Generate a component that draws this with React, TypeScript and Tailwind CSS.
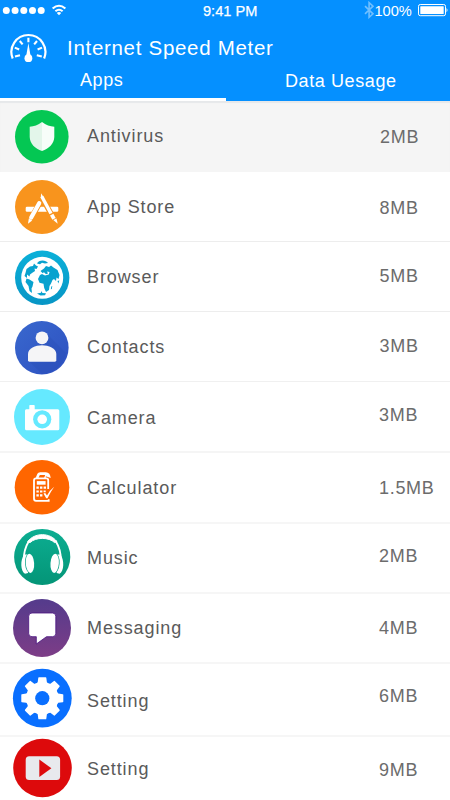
import React from 'react';

function Icon({ className, children }: { className: string; children: React.ReactNode }) {
  return (
    <svg viewBox="-30 -30 60 60" className={`ml-3 h-[60px] w-[60px] shrink-0 ${className}`}>
      {children}
    </svg>
  );
}

const Shield = () => (
  <>
    <circle cx="-0.2" cy="-0.2" r="26.8" fill="#04c753" />
    <path d="M0-15C-4-12-8-10.5-12.3-10.3V0C-12 7-7 11.5 0 14Z" fill="#e3f6ea" />
    <path d="M0-15C4-12 8-10.5 12.3-10.3V0C12 7 7 11.5 0 14Z" fill="#f7fdf9" />
  </>
);

const Store = () => (
  <>
    <circle r="27" fill="#f8941d" />
    <rect x="-16.3" y="-0.3" width="32.6" height="5" rx="1.3" fill="#fff" />
    <path d="M-1.5-5.5L-10.5 10.5M-0.3-10L13 14" stroke="#f8941d" strokeWidth="5.6" />
    <path d="M-2.8-3.8L-10.8 10.6" stroke="#fff" strokeWidth="4.2" strokeLinecap="round" />
    <path d="M-13.2 11.4L-9.8 13.4L-14 16.8Z" fill="#fff" />
    <path d="M-0.9-13.8L2.2-9L0.8-6.8L-1.2-9.4Z" fill="#fff" />
    <path d="M-0.2-10.5L9 6.5" stroke="#fff" strokeWidth="3.4" />
    <path d="M9.7 7.6L12 11.8" stroke="#fff" strokeWidth="3.8" />
    <path d="M11.3 13L14.5 11.4L15.7 16.8Z" fill="#fff" />
  </>
);

const Globe = () => (
  <>
    <defs>
      <linearGradient id="sea" x1="0" y1="0" x2="0" y2="1">
        <stop stopColor="#0bb0d9" />
        <stop offset="1" stopColor="#0795c5" />
      </linearGradient>
    </defs>
    <circle cx="0.2" cy="-0.2" r="27.2" fill="url(#sea)" />
    <circle cx="0.2" cy="-0.2" r="21" fill="#fff" />
    <g fill="#08a2cf">
      <path d="M-16.5-5L-15.5-9L-12-11.5L-9-12L-8-14.5L-6-12.5L-4-11.5L-5.5-9L-7.5-9.5L-7-7L-10-5L-12-3.5L-12.5-1.5L-15-3.5L-15 0L-17.5-2Z" />
      <path d="M-15.5 0.5L-12.5 1.5L-8.5 4L-9.5 8.5L-10.5 10.5L-10 15L-12.5 13L-13.5 8L-16.5 4Z" />
      <path d="M-5-14.5C-3.5-18.5 4-18.5 6-15L3-14.5L0-15.3L-2-13.8Z" />
      <path d="M-1.5-7L2-9.5L4-12L7-11L9-12.5L11.5-10.5L15.5-8L17.5-3L16.5 1L14.5-.5L14 3L12 1L10.5 2L9 5.5L7.5 8L7 12L4 14L2.2 10L1.5 5.8L-2.5 4.8L-4 1L-2-3L1-4.5Z" />
      <path d="M-.5-4.2L2-5.8L4-3.8L6-4.5L5-6.4L7.5-6L6.8-3.5L3-2.6Z" fill="#fff" />
      <path d="M-5 15.5L-1 14.8V13L.5 15L4 15.3L3 17.3L-1.5 17.5Z" />
      <path d="M9.3 8.5L10.3 8L9.8 11L8.8 11.3ZM15.5 3L17.3 2.5L16.3 5.5Z" />
    </g>
  </>
);

const Person = () => (
  <>
    <defs>
      <linearGradient id="navy" x1="0" y1="0" x2="1" y2="1">
        <stop stopColor="#3968ce" />
        <stop offset="1" stopColor="#2d50c0" />
      </linearGradient>
    </defs>
    <circle cx="-0.2" cy="-0.3" r="26.8" fill="url(#navy)" />
    <path d="M4.7-14.2L24 5A27 27 0 0 1 0 26L-13 13.5Z" fill="#294cb5" opacity=".35" />
    <circle cx="0" cy="-10.2" r="6.4" fill="#f5f5f7" />
    <path d="M-14 12.3V6C-14 0-6.5-2.8 0-2.8S14.3 0 14.3 6V12.3Q14.3 13.7 12.9 13.7H-12.6Q-14 13.7-14 12.3Z" fill="#f5f5f7" />
  </>
);

const Camera = () => (
  <>
    <circle r="28" fill="#65e9ff" />
    <path d="M-15.7-7.8H-12.7V-11.2Q-12.7-12-12-12H-8Q-7.3-12-7.3-11.2V-7.8H15.8Q17.3-7.6 17.3-6.3V11.8Q17.3 13.3 15.8 13.3H-15.5Q-17 13.3-17 11.8V-6.3Q-17-7.8-15.7-7.8Z" fill="#fff" />
    <circle cx="0.2" cy="2.3" r="9.1" fill="#65e9ff" />
    <circle cx="0.2" cy="2.3" r="4.8" fill="#fff" />
  </>
);

const Calculator = () => (
  <>
    <circle cy="0.3" r="27.3" fill="#ff6600" />
    <path d="M6.2 2V-6.7Q6.2-8.6 4.3-8.6H-6Q-8-8.6-8-6.6V11.5Q-8 13.8-6 13.8H6.7V12.2" fill="none" stroke="#fff" strokeWidth="1.8" />
    <path d="M-6.3-9.3L-4.6-13.3Q-4-14.8-1.8-14.8H3.8Q8.3-14.5 8.7-9L3.8-10.8V-8.6H1.9L3.2-11.9H-2.2L-3.7-8.6Z" fill="#fff" />
    <path d="M-5.2-5.9H3.6V-2.3H-5.2Z" fill="#fff" />
    <path d="M-5.6-.4h2.4v2.2h-2.4zM-2-.4h2.4v2.2h-2.4zM1.6-.4h2.4v2.2h-2.4zM-5.6 3.4h2.4v2.2h-2.4zM-2 3.4h2.4v2.2h-2.4zM1.6 3.4h2.1v1.9h-2.1zM-5.6 7.3h2.4v2.2h-2.4zM-2 7.3h2.4v2.2h-2.4z" fill="#fff" />
    <path d="M1.5 6.6L3.2 6L5 8.4Q8 3 12.2-.2Q8.2 5.5 5.5 11.3H4.2Z" fill="#fff" />
  </>
);

const Headphones = () => (
  <>
    <defs>
      <linearGradient id="teal" x1="0" y1="0" x2="0" y2="1">
        <stop stopColor="#0cae92" />
        <stop offset="1" stopColor="#049577" />
      </linearGradient>
    </defs>
    <circle cx="0.2" r="28.1" fill="url(#teal)" />
    <path d="M-18 3C-18.8-6-15.5-12-12.8-16.5M18.6 3C19.4-6 16.1-12 13.4-16.5" fill="none" stroke="#fff" strokeWidth="1.9" />
    <path d="M-14.3-15.2C-8-24.7 8.6-24.7 14.9-15.2L12.6-14.4C7-20-6.4-20-12-14.4Z" fill="#fff" stroke="#fff" />
    <path d="M-17.8-2.5C-22 3-21.5 14-17 16.8L-14 16V-2.5ZM18.4-2.5C22.6 3 22.1 14 17.6 16.8L14.6 16V-2.5Z" fill="#fff" />
    <ellipse cx="-12" cy="6.3" rx="5" ry="10.3" fill="#08a387" transform="rotate(-4 -12 6)" />
    <ellipse cx="12.6" cy="6.3" rx="5" ry="10.3" fill="#08a387" transform="rotate(4 12.6 6)" />
    <ellipse cx="-12.1" cy="6.3" rx="4.2" ry="9.6" fill="#fff" transform="rotate(-4 -12 6)" />
    <ellipse cx="12.7" cy="6.3" rx="4.2" ry="9.6" fill="#fff" transform="rotate(4 12.6 6)" />
  </>
);

const Message = () => (
  <>
    <defs>
      <linearGradient id="violet" x1="0" y1="0" x2="0" y2="1">
        <stop stopColor="#543b8c" />
        <stop offset="1" stopColor="#7d3d87" />
      </linearGradient>
    </defs>
    <circle cx="0" cy="0" r="29" fill="url(#violet)" />
    <path d="M-10-15H10.5Q13.8-15 13.8-11.7V5.4Q13.8 8.7 10.5 8.7H4.5L-5.7 16V8.7H-10Q-13.3 8.7-13.3 5.4V-11.7Q-13.3-15-10-15Z" fill="#fff" stroke="#49117f" strokeWidth=".8" />
  </>
);

const Gear = () => (
  <>
    <circle cx="0.3" cy="0.2" r="29.4" fill="#096fff" />
    <g transform="translate(.3 .2)" fill="#fff">
      <circle r="16.2" />
      {[0, 45, 90, 135, 180, 225, 270, 315].map((a) => (
        <path key={a} d="M-6-14.5L-4.6-16L-4-20.5Q-3.9-21-3.4-21H3.4Q3.9-21 4-20.5L4.6-16L6-14.5Z" transform={`rotate(${a})`} />
      ))}
    </g>
    <circle cx="0.3" cy="0.2" r="7.1" fill="#096fff" />
  </>
);

const Video = () => (
  <>
    <circle cx="0.5" cy="0" r="29.3" fill="#dd0a0c" />
    <rect x="-16.3" y="-11.7" width="34.4" height="23.7" rx="3.5" fill="#e8e9ed" />
    <path d="M-2.7-8.5V9L9.4.3Z" fill="#dd0a0c" />
  </>
);

const rows = [
  { name: 'Antivirus', size: '2MB', art: <Shield />, row: 'h-[71px] bg-[#f5f5f5] shadow-[inset_0_2px_1px_#e6e8ea]', icon: 'mt-1.5', label: 'mt-[25px]', value: 'mt-[26px] w-[70px]' },
  { name: 'App Store', size: '8MB', art: <Store />, row: 'h-[70px] border-b border-[#ededed]', icon: 'mt-[5px]', label: 'mt-[25px]', value: 'mt-[26px] w-[70.5px]' },
  { name: 'Browser', size: '5MB', art: <Globe />, row: 'h-[70px] border-b border-[#ededed]', icon: 'mt-1.5', label: 'mt-[25px]', value: 'mt-6 w-[70.5px]' },
  { name: 'Contacts', size: '3MB', art: <Person />, row: 'h-[70px] border-b border-[#f0f0f0]', icon: 'mt-1.5', label: 'mt-[25px]', value: 'mt-6 w-[70.5px]' },
  { name: 'Camera', size: '3MB', art: <Camera />, row: 'h-[71px] border-b-2 border-[#f5f5f5]', icon: 'mt-[5px]', label: 'mt-[26px]', value: 'mt-[23px] w-[71px]' },
  { name: 'Calculator', size: '1.5MB', art: <Calculator />, row: 'h-[71px] border-b-2 border-[#f6f6f6]', icon: 'mt-1', label: 'mt-[25px]', value: 'mt-[25px] w-[71px]' },
  { name: 'Music', size: '2MB', art: <Headphones />, row: 'h-[70px] border-b-2 border-[#f6f6f6]', icon: 'mt-[3px]', label: 'mt-6', value: 'mt-[22px] w-[71px]' },
  { name: 'Messaging', size: '4MB', art: <Message />, row: 'h-[70px] border-b-2 border-[#f6f6f6]', icon: 'mt-1', label: 'mt-6', value: 'mt-6 w-[71px]' },
  { name: 'Setting', size: '6MB', art: <Gear />, row: 'h-[73px] border-b-2 border-[#f6f6f6]', icon: 'mt-1', label: 'mt-[27px]', value: 'mt-[22px] w-[71px]' },
  { name: 'Setting', size: '9MB', art: <Video />, row: 'h-[63px]', icon: 'mt-px', label: 'mt-[22px]', value: 'mt-[23px] w-[71px]' },
];

function StatusBar() {
  return (
    <div className="flex h-[22px] items-start text-[14.6px] leading-5">
      <svg viewBox="0 0 70 22" className="h-[22px] w-[70px] shrink-0" fill="#fff">
        {[6.3, 15.1, 23.8, 32.5, 41.2].map((x) => (
          <circle key={x} cx={x} cy="10.4" r="3.5" />
        ))}
        <path d="M51.9 7.7Q59 1.6 66.1 7.7L64.6 9.2Q59 4.3 53.4 9.2Z" />
        <path d="M54.7 10.5Q59 6.9 63.3 10.5L61.9 11.9Q59 9.5 56.1 11.9Z" />
        <path d="M56.8 12.9Q59 11.2 61.2 12.9L59 15.2Z" />
      </svg>
      <span className="ml-[133px] w-[159.5px] whitespace-nowrap pt-px [-webkit-text-stroke:0.25px_white]">9:41 PM</span>
      <svg viewBox="0 0 12 18" className="mt-[1px] h-[18px] w-3 shrink-0" fill="none" stroke="#70bfff" strokeWidth="1.6">
        <path d="M2 5.2L10 12.8L6.1 16.3V1.6L10 5.2L2 12.8" />
      </svg>
      <span className="w-[43px] whitespace-nowrap pt-px">100%</span>
      <svg viewBox="0 0 32 22" className="h-[22px] w-8 shrink-0">
        <rect x=".5" y="4.5" width="27" height="11.2" rx="1.8" fill="none" stroke="#fff" />
        <rect x="2.3" y="6.2" width="23.4" height="7.8" rx=".5" fill="#fff" />
        <path d="M28.5 8Q30.5 10.1 28.5 12.2Z" fill="#fff" />
      </svg>
    </div>
  );
}

function GaugeIcon() {
  return (
    <svg viewBox="10 32 37 31" className="ml-2.5 mt-2.5 h-[31px] w-[37px] shrink-0" fill="none" stroke="#fff">
      <path d="M12.7 58.5A17 17 0 1 1 44.1 58.5" strokeWidth="2.2" />
      <path d="M28.4 37.8V42.3M19.8 41L22.6 44.4M37 41L34.2 44.4M14.8 47.6L19.2 49.5M42 47.6L37.6 49.5M15 56.6L20 55.3M41.8 56.6L36.8 55.3" strokeWidth="2.1" />
      <path d="M28.4 43L26.2 56H30.6Z" fill="#fff" stroke="none" />
      <circle cx="28.4" cy="58.2" r="3.9" fill="#fff" stroke="none" />
    </svg>
  );
}

export default function App() {
  return (
    <div className="flex h-[800px] w-[450px] flex-col overflow-hidden bg-white font-['Liberation_Sans',Arial,sans-serif]">
      <header className="h-[101px] shrink-0 bg-[#0590ff] text-white">
        <StatusBar />
        <div className="flex h-12 items-start">
          <GaugeIcon />
          <h1 className="ml-5 mt-3.5 whitespace-nowrap text-[20.5px] leading-6 tracking-[0.7px]">Internet Speed Meter</h1>
        </div>
        <nav className="flex h-[31px] text-[18px] leading-5 tracking-[0.6px]">
          <div className="h-full w-[226px] border-b-[3px] border-white pl-[80px]">Apps</div>
          <div className="pl-[59px] pt-px">Data Uesage</div>
        </nav>
      </header>
      <ul>
        {rows.map((r, i) => (
          <li key={i} className={`flex items-start text-[18px] leading-5 ${r.row}`}>
            <Icon className={r.icon}>{r.art}</Icon>
            <span className={`ml-[15px] grow tracking-[0.9px] text-[#5a5a5a] ${r.label}`}>{r.name}</span>
            <span className={`shrink-0 whitespace-nowrap tracking-[0.7px] text-[#6c6c6c] ${r.value}`}>{r.size}</span>
          </li>
        ))}
      </ul>
    </div>
  );
}
